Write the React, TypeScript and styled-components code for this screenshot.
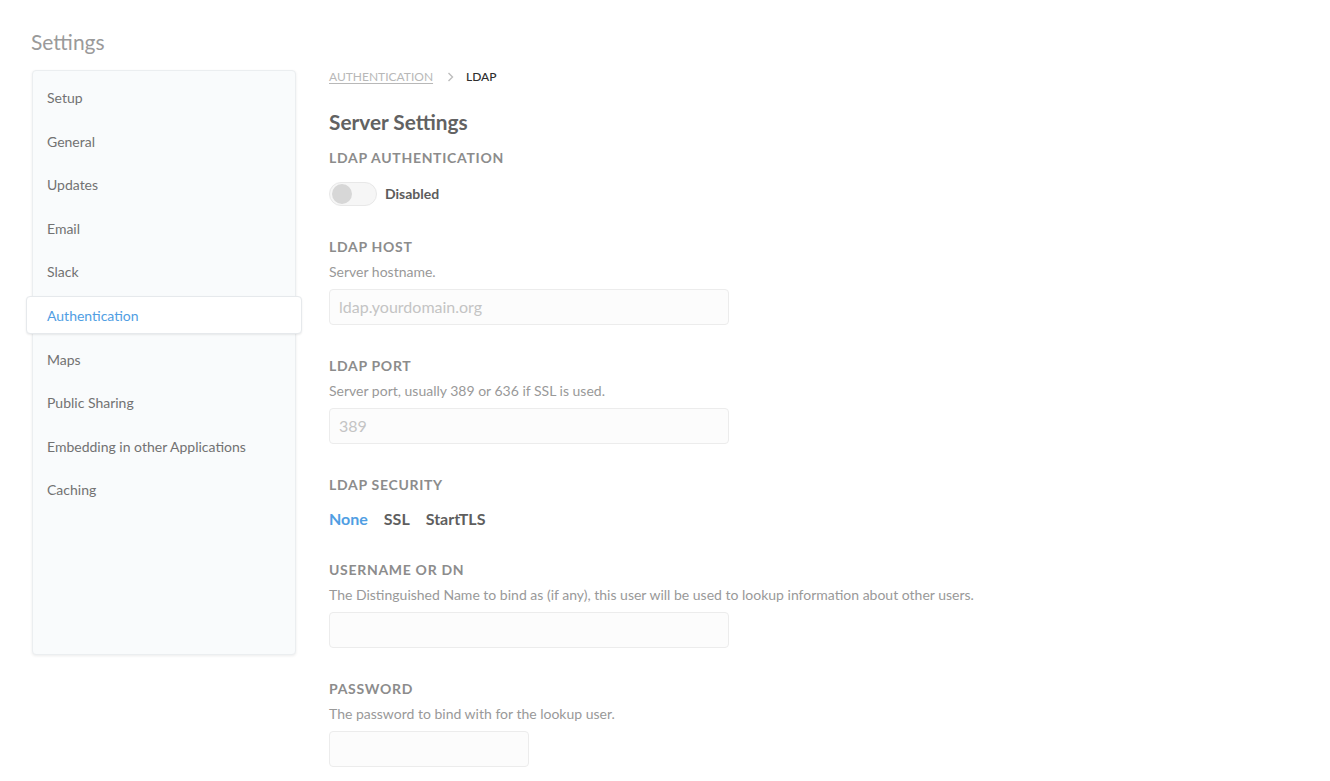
import React from "react";
import styled, { createGlobalStyle } from "styled-components";

const GlobalStyle = createGlobalStyle`
  html, body {
    margin: 0;
    padding: 0;
    background: #ffffff;
    font-family: Lato, "Noto Sans", sans-serif;
    -webkit-font-smoothing: antialiased;
  }
  * {
    box-sizing: border-box;
  }
`;

const Page = styled.div`
  padding: 29px 32px 0 32px;
  min-height: 781px;
`;

const Title = styled.h1`
  margin: 0 0 15px -1px;
  font-size: 21px;
  line-height: 26px;
  font-weight: 400;
  color: #9a9a9a;
`;

const Body = styled.div`
  display: flex;
  align-items: flex-start;
  gap: 33px;
`;

const Sidebar = styled.nav`
  width: 264px;
  height: 585px;
  flex-shrink: 0;
  background: #f9fbfc;
  border: 1px solid #ebeef0;
  border-radius: 4px;
  box-shadow: 0 1px 3px rgba(0, 0, 0, 0.08);
  padding-top: 7.5px;
  display: flex;
  flex-direction: column;
  gap: 5.6px;
`;

const NavItem = styled.div<{ $active?: boolean }>`
  height: 38px;
  margin: 0 -7px;
  padding: 0 20px;
  display: flex;
  align-items: center;
  font-size: 14px;
  color: ${(p) => (p.$active ? "#509ee3" : "#727272")};
  background: ${(p) => (p.$active ? "#ffffff" : "transparent")};
  border: 1px solid ${(p) => (p.$active ? "#e6e9ec" : "transparent")};
  border-radius: 4px;
  box-shadow: ${(p) => (p.$active ? "0 1px 2px rgba(0, 0, 0, 0.08)" : "none")};
`;

const Content = styled.main`
  display: flex;
  flex-direction: column;
  flex: 1;
`;

const Breadcrumbs = styled.div`
  display: flex;
  align-items: center;
  height: 12px;
  margin-top: 1px;
  font-size: 12px;
  line-height: 12px;
  text-transform: uppercase;
`;

const CrumbLink = styled.span`
  color: #b8b8b8;
  text-decoration: underline;
  text-underline-offset: 2px;
`;

const CrumbSep = styled.span`
  display: flex;
  margin: 0 12px 0 14px;
  color: #bdbdbd;
`;

const CrumbCurrent = styled.span`
  color: #2e2e2e;
  font-weight: 500;
`;

const Heading = styled.h2`
  margin: 26px 0 14px;
  font-size: 20.8px;
  line-height: 26px;
  font-weight: 700;
  color: #626262;
`;

const Section = styled.section`
  display: flex;
  flex-direction: column;
  align-items: flex-start;
  margin-bottom: 32px;
`;

const Label = styled.div`
  font-size: 14px;
  line-height: 18px;
  font-weight: 700;
  letter-spacing: 0.05em;
  text-transform: uppercase;
  color: #8c8c8c;
`;

const Description = styled.div`
  margin-top: 7px;
  font-size: 14px;
  line-height: 18px;
  color: #999999;
`;

const Input = styled.input<{ $width?: number }>`
  margin-top: 8px;
  width: ${(p) => p.$width ?? 400}px;
  height: 36px;
  padding: 0 9px;
  background: #fcfcfc;
  border: 1px solid #ececec;
  border-radius: 4px;
  font-family: Lato, "Noto Sans", sans-serif;
  font-size: 16px;
  color: #555;
  outline: none;
  &::placeholder {
    color: #c4c4c4;
  }
`;

const ToggleRow = styled.div`
  margin-top: 14.5px;
  display: flex;
  align-items: center;
  gap: 8px;
`;

const Toggle = styled.div`
  width: 48px;
  height: 24px;
  border-radius: 12px;
  background: #f6f6f6;
  border: 1px solid #e8e8e8;
  display: flex;
  align-items: center;
  padding-left: 2px;
`;

const Knob = styled.div`
  width: 20px;
  height: 20px;
  border-radius: 50%;
  background: #d7d7d7;
`;

const ToggleText = styled.span`
  font-size: 14px;
  font-weight: 700;
  color: #5c5c5c;
`;

const Options = styled.div`
  margin-top: 15px;
  display: flex;
  gap: 16px;
`;

const Option = styled.span<{ $selected?: boolean }>`
  font-size: 16px;
  line-height: 20px;
  font-weight: 700;
  color: ${(p) => (p.$selected ? "#509ee3" : "#5e5e5e")};
`;

const navItems = [
  "Setup",
  "General",
  "Updates",
  "Email",
  "Slack",
  "Authentication",
  "Maps",
  "Public Sharing",
  "Embedding in other Applications",
  "Caching",
];

export default function App() {
  return (
    <>
      <GlobalStyle />
      <Page>
        <Title>Settings</Title>
        <Body>
          <Sidebar>
            {navItems.map((item) => (
              <NavItem key={item} $active={item === "Authentication"}>
                {item}
              </NavItem>
            ))}
          </Sidebar>
          <Content>
            <Breadcrumbs>
              <CrumbLink>Authentication</CrumbLink>
              <CrumbSep>
                <svg width="7" height="10" viewBox="0 0 7 10" fill="none">
                  <path d="M1.5 1 L5.5 5 L1.5 9" stroke="currentColor" strokeWidth="1.4" />
                </svg>
              </CrumbSep>
              <CrumbCurrent>LDAP</CrumbCurrent>
            </Breadcrumbs>
            <Heading>Server Settings</Heading>

            <Section>
              <Label>LDAP Authentication</Label>
              <ToggleRow>
                <Toggle>
                  <Knob />
                </Toggle>
                <ToggleText>Disabled</ToggleText>
              </ToggleRow>
            </Section>

            <Section>
              <Label>LDAP Host</Label>
              <Description>Server hostname.</Description>
              <Input placeholder="ldap.yourdomain.org" />
            </Section>

            <Section>
              <Label>LDAP Port</Label>
              <Description>Server port, usually 389 or 636 if SSL is used.</Description>
              <Input placeholder="389" />
            </Section>

            <Section>
              <Label>LDAP Security</Label>
              <Options>
                <Option $selected>None</Option>
                <Option>SSL</Option>
                <Option>StartTLS</Option>
              </Options>
            </Section>

            <Section>
              <Label>Username or DN</Label>
              <Description>
                The Distinguished Name to bind as (if any), this user will be used to lookup information about other users.
              </Description>
              <Input />
            </Section>

            <Section>
              <Label>Password</Label>
              <Description>The password to bind with for the lookup user.</Description>
              <Input type="password" $width={200} />
            </Section>
          </Content>
        </Body>
      </Page>
    </>
  );
}
